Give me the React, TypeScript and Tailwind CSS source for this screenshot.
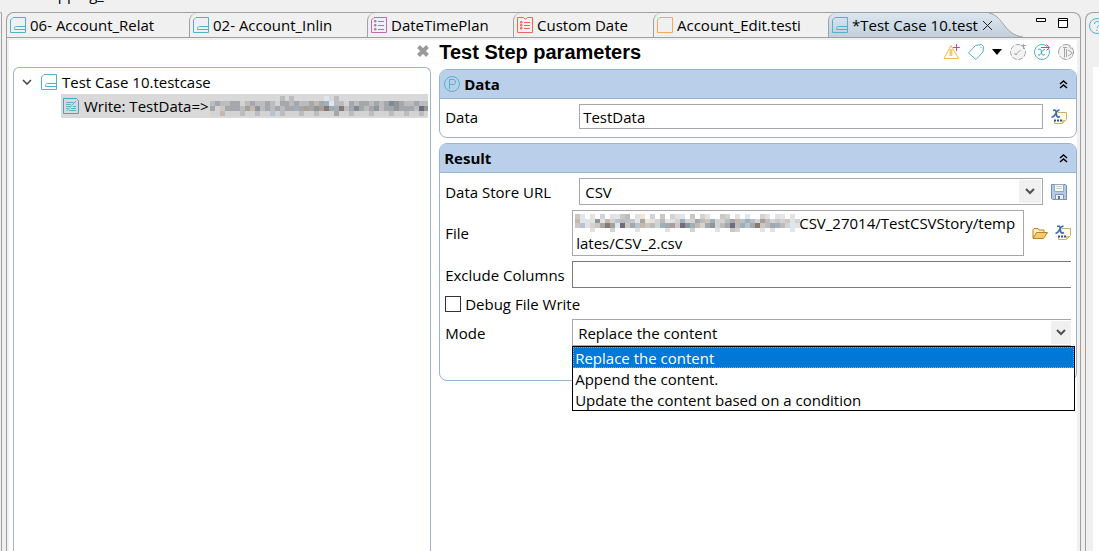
import type { ReactNode } from 'react';

type IconProps = { className?: string };

const CaseIcon = ({ className = 'h-4 w-4' }: IconProps) => (
  <svg viewBox="0 0 16 16" className={`shrink-0 ${className}`} fill="none" stroke="#4fb3c7" aria-hidden="true">
    <path d="M3 .5h12.500v15H.5V3z" />
    <path d="M15.500 9.500h-9c-1.500 0-2 1-2 2v1h11" />
  </svg>
);

const StepIcon = () => (
  <svg viewBox="0 0 16 16" className="h-4 w-4 shrink-0" fill="none" stroke="#3fa9bf" aria-hidden="true">
    <path d="M.5 .5h13l2 2v13H.5z" />
    <path d="M3 4.500h7.500M3 6.500h5M3 8.500h4M3 10.500h2M8 10.500h5M10 8.500h3M6 12.500h7M3.500 13L13 3" strokeWidth=".8" />
  </svg>
);

const ListIcon = ({ color }: { color: string }) => (
  <svg viewBox="0 0 16 16" className="h-4 w-4 shrink-0" fill="none" stroke={color} aria-hidden="true">
    <path d="M3 .5h12.500v15H.5V3z" />
    <path d="M7 4.500h6M7 8.500h6M7 12.500h6" />
    <path d="M3.500 3.500h1.500v1.500H3.500zM3.500 7.500h1.500v1.500H3.500zM3.500 11.500h1.500v1.500H3.500z" />
  </svg>
);

const FolderListIcon = ({ color }: { color: string }) => (
  <svg viewBox="0 0 16 16" className="h-4 w-4 shrink-0" fill="none" stroke={color} aria-hidden="true">
    <path d="M.5 .5h6l1.500 1.500h1L10.500 .5h5v15H.5z" />
    <path d="M7 5.500h6M7 8.500h6M7 11.500h6" />
    <path d="M3.500 4.500h1.500v1.500H3.500zM3.500 7.500h1.500v1.500H3.500zM3.500 10.500h1.500v1.500H3.500z" />
  </svg>
);

const BlankIcon = () => (
  <svg viewBox="0 0 16 16" className="h-4 w-4 shrink-0" fill="none" stroke="#f5a85a" aria-hidden="true">
    <path d="M3 .5h12.500v15H.5V3z" />
  </svg>
);

const ParamIcon = () => (
  <svg viewBox="0 0 16 16" className="h-4 w-4 shrink-0" fill="none" stroke="#4fb3c7" aria-hidden="true">
    <circle cx="8" cy="8" r="7.500" />
    <path d="M5.500 13V3.500H9c3.300 0 3.300 5 0 5H6" />
  </svg>
);

const WarningIcon = () => (
  <svg viewBox="0 0 17 16" className="h-4 w-[17px]" fill="none" aria-hidden="true">
    <path d="M8 1.500L15.500 14.500H1z" stroke="#f9b84d" />
    <path d="M6.500 5h3v7h-3z" fill="#fbc66c" />
    <path d="M13.500 0v7M10 3.500h7" stroke="#e6399b" />
  </svg>
);

const TagIcon = () => (
  <svg viewBox="0 0 16 16" className="h-4 w-4" fill="none" stroke="#4fb3c7" aria-hidden="true">
    <path d="M.5 9L7.500 1.500l6-1 2 2-.5 5.500-7 7.500z" />
    <path d="M13 3v1" />
  </svg>
);

const RunOffIcon = () => (
  <svg viewBox="0 0 16 16" className="h-4 w-4" fill="none" stroke="#a3a3a3" aria-hidden="true">
    <circle cx="8" cy="8" r="7.500" strokeDasharray="5 1.500" fill="#f3f3f3" />
    <path d="M6 10.500L10.500 6M5 9v1.500h2M11 1.500h5M13.500 0v5" />
  </svg>
);

const VariableIcon = () => (
  <svg viewBox="0 0 16 16" className="h-4 w-4" fill="none" stroke="#4fb3c7" aria-hidden="true">
    <circle cx="8" cy="8" r="7.500" />
    <path d="M4 5.500c3-1 3 0 3.500 2.500s1 4 3.500 2.500M11 5.500c-2 0-2.500 1.500-3.500 3s-1.500 3-3.500 2.500" stroke="#2f9db5" />
    <path d="M7 3.500h8M12.500 .5l3 3-3 3" stroke="#e6399b" />
  </svg>
);

const ForkOffIcon = () => (
  <svg viewBox="0 0 16 16" className="h-4 w-4" fill="none" stroke="#a3a3a3" aria-hidden="true">
    <circle cx="8" cy="8" r="7.500" strokeDasharray="9 1.500" fill="#f3f3f3" />
    <path d="M5 3.500h4M6.500 13.500V3.500M8.500 5v8M10 6l4.500 3L10 12M11 2.500l3 3" />
  </svg>
);

const ExpressionIcon = () => (
  <svg viewBox="0 0 16 16" className="h-4 w-4" fill="none" aria-hidden="true">
    <path d="M7 3.500h8.500v7l-4 4H3.500V11" fill="#fffbe9" stroke="#c8b26a" />
    <path d="M15 11h-4v4z" fill="#e2c56f" />
    <path d="M2 1.500c3-1 3 0 3.300 3s1 4.500 3.700 3M8.500 1C6 1 5.500 3 4.500 5S3 8.500 .5 8" stroke="#3e6cb0" strokeWidth="1.700" />
    <path d="M3 11.500h2M6 11.500h2M9 11.500h2" stroke="#2f5596" strokeWidth="2" />
  </svg>
);

const SaveIcon = () => (
  <svg viewBox="0 0 16 16" className="h-4 w-4" fill="none" aria-hidden="true">
    <path d="M.5 .5h14l1 1v14H1.500l-1-1z" fill="#b4cae6" stroke="#6f8fb5" />
    <path d="M3.500 .5h9v7h-9z" fill="#f6f8f2" stroke="#8fa8c6" />
    <path d="M5 2.500h6M5 4.500h6" stroke="#c9d4c4" />
    <path d="M4.500 10.500h8v5h-8z" fill="#e8eef2" stroke="#7c95b2" />
    <path d="M7 12h2v3H7z" fill="#5d7893" />
  </svg>
);

const FolderIcon = () => (
  <svg viewBox="0 0 16 16" className="h-4 w-4" fill="none" stroke="#b9812a" strokeLinejoin="round" aria-hidden="true">
    <path d="M1 13V4.500l1-1h4l1 1.500h5V7.500" fill="#fbeebd" />
    <path d="M1 13.500l3.500-6h11l-4 6z" fill="#f6cc6b" />
  </svg>
);

const Chevron = () => (
  <svg viewBox="0 0 10 7" className="h-[7px] w-[10px]" fill="none" stroke="#505050" strokeWidth="2" aria-hidden="true">
    <path d="M1 1l4 4 4-4" />
  </svg>
);

// Redacted path, one letter per 5px cell
const shades: Record<string, string> = {
  a: '#d3d3d3', b: '#bcbcbe', c: '#a5a8aa', d: '#8f9598', e: '#a89f99', f: '#857b74',
  g: '#9fb0bd', h: '#c5b9ae', i: '#b7c4cf', j: '#7d8b96', k: '#cdc6c1', l: '#e4e2e0',
  m: '#efe6d6', n: '#dfe7ee', o: '#6f6c80',
};

const treeCells = [
  '..............b.b......n.b..................',
  'bcbbccabcbbcbaccbcbbchcgnbbacbccbcbcjdcbbcbb',
  'cakcccbehdbcbcbccgcecdefcgfbcjcbcdbccdcccbod',
  'aahaaabaabaaiabaaabaabaaacaabaaabaaabaabaaba',
];

const fileCells = [
  'kn.l.a.lnkb.lm.a.k.aln.k.al..ka.l.n..al.ln.l.',
  'hnlldlhaibikncmlabnlagaacbkgaabchigbaebakakna',
  'kilakcfenokcihkbagcekodghacdabcobgicfkbcgbanl',
  '...l...a....l.....l....a....l..ka....n.l...n.',
];

const Redacted = ({ rows, className }: { rows: string[]; className: string }) => (
  <svg viewBox={`0 0 ${rows[1].length} 4`} preserveAspectRatio="none" shapeRendering="crispEdges" className={className} aria-hidden="true">
    {rows.map((row, y) =>
      row.split('').map((c, x) => (c === '.' ? null : <rect key={`${x}-${y}`} x={x} y={y} width="1" height="1" fill={shades[c]} />)),
    )}
  </svg>
);

const tabs = [
  { label: '06- Account_Relat', icon: <CaseIcon />, width: 'w-[182px]' },
  { label: '02- Account_Inlin', icon: <CaseIcon />, width: 'w-[178px]' },
  { label: 'DateTimePlan', icon: <ListIcon color="#c069b4" />, width: 'w-[146px]' },
  { label: 'Custom Date', icon: <FolderListIcon color="#f0655a" />, width: 'w-[140px]' },
  { label: 'Account_Edit.testi', icon: <BlankIcon />, width: 'w-[175px]' },
];

const TabBar = () => (
  <div role="tablist" className="flex h-[25px] overflow-hidden rounded-t-lg border-b border-[#a0a0a0]">
    {tabs.map((tab, i) => (
      <button
        key={tab.label}
        role="tab"
        aria-selected={false}
        className={`flex shrink items-center gap-1 overflow-hidden rounded-tl-lg pl-[3px] whitespace-nowrap ${tab.width} ${i > 0 ? 'border-l border-[#a0a0a0]' : ''}`}
      >
        {tab.icon}
        {tab.label}
      </button>
    ))}
    <div className="flex shrink-0 rounded-tl-lg border-l border-[#a0a0a0] bg-linear-to-b from-[#dbe6f0] to-[#c2cfdc]">
      <button role="tab" aria-selected className="flex items-center gap-1 pl-[3px] whitespace-nowrap">
        <CaseIcon />
        *Test Case 10.test
      </button>
      <button aria-label="Close tab" className="relative z-10 pl-1">
        <svg viewBox="0 0 11 11" className="h-[11px] w-[11px]" fill="none" stroke="#222" aria-hidden="true">
          <path d="M1 1l9 9M10 1l-9 9" />
        </svg>
      </button>
    </div>
    <svg viewBox="0 0 34 24" className="-ml-1 h-6 w-[34px] shrink-0" aria-hidden="true">
      <defs>
        <linearGradient id="tabFill" x1="0" y1="0" x2="0" y2="1">
          <stop offset="0" stopColor="#dbe6f0" />
          <stop offset="1" stopColor="#c2cfdc" />
        </linearGradient>
      </defs>
      <path d="M0 0c8 2 11 7 15 12s9 11 19 12H0z" fill="url(#tabFill)" />
      <path d="M0 0c8 2 11 7 15 12s9 11 19 12" fill="none" stroke="#a0a0a0" />
    </svg>
    <div className="ml-auto flex items-center gap-3 pr-3 pb-1">
      <button aria-label="Minimize">
        <svg viewBox="0 0 10 10" className="h-[10px] w-[10px]" fill="#fff" stroke="#000" aria-hidden="true">
          <path d="M.5 .5h9v3h-9z" />
        </svg>
      </button>
      <button aria-label="Maximize">
        <svg viewBox="0 0 10 10" className="h-[10px] w-[10px]" fill="#fff" stroke="#000" aria-hidden="true">
          <path d="M.5 .5h9v9h-9zM0 2.500h10" />
        </svg>
      </button>
    </div>
  </div>
);

const TestTree = () => (
  <section className="flex w-2/5 flex-col pr-[5px] pl-1">
    <div className="flex h-[27px] justify-end pt-1 pr-[2px]">
      <button aria-label="Close panel" className="h-[14px]">
        <svg viewBox="0 0 12 12" className="h-3 w-3" stroke="#9a9a9a" strokeWidth="4" aria-hidden="true">
          <path d="M1.500 1.500l9 9M10.500 1.500l-9 9" />
        </svg>
      </button>
    </div>
    <ul role="tree" className="flex-1 overflow-hidden rounded-t-md border border-b-0 border-[#99b4d1] pt-[2px] pr-[2px]">
      <li role="treeitem" aria-expanded>
        <div className="flex h-6 items-center pl-2">
          <svg viewBox="0 0 10 6" className="mr-[9px] h-[6px] w-[10px]" fill="none" stroke="#444" strokeWidth="1.500" aria-hidden="true">
            <path d="M1 1l4 4 4-4" />
          </svg>
          <CaseIcon />
          <span className="pl-[5px]">Test Case 10.testcase</span>
        </div>
        <ul role="group" className="pl-[47px]">
          <li role="treeitem" aria-selected className="flex h-6 items-center gap-[5px] overflow-hidden bg-[#d9d9d9] pl-[2px] whitespace-nowrap">
            <StepIcon />
            <span>Write: TestData=&gt;</span>
            <Redacted rows={treeCells} className="-ml-1 h-5 min-w-0 flex-1" />
          </li>
        </ul>
      </li>
    </ul>
  </section>
);

const Section = ({ title, icon, children }: { title: string; icon?: ReactNode; children: ReactNode }) => (
  <section className="rounded-lg border border-[#99b4d1]">
    <header className="flex h-[29px] items-center gap-1 rounded-t-md border-b border-[#99b4d1] bg-[#bad0ea] pr-2 pl-1">
      {icon}
      <h2 className="font-bold">{title}</h2>
      <button aria-label={`Collapse ${title}`} className="ml-auto">
        <svg viewBox="0 0 9 9" className="h-[9px] w-[9px]" fill="none" stroke="#000" strokeWidth="1.500" aria-hidden="true">
          <path d="M1 4l3.500-3L8 4M1 8l3.500-3L8 8" />
        </svg>
      </button>
    </header>
    {children}
  </section>
);

const modes = ['Replace the content', 'Append the content.', 'Update the content based on a condition'];

const Parameters = () => (
  <main className="min-w-0 flex-1 pl-[3px]">
    <div className="flex h-[29px] items-center pr-[3px] pb-[6px]">
      <h1 className="font-['Liberation_Sans',Arial,sans-serif] text-xl font-bold">Test Step parameters</h1>
      <div className="ml-auto flex items-center gap-2">
        <button aria-label="Add warning"><WarningIcon /></button>
        <button aria-label="Tags"><TagIcon /></button>
        <button aria-label="More tags">
          <svg viewBox="0 0 10 6" className="h-[6px] w-[10px]" aria-hidden="true">
            <path d="M0 0h10L5 6z" />
          </svg>
        </button>
        <button aria-label="Run step"><RunOffIcon /></button>
        <button aria-label="Variables"><VariableIcon /></button>
        <button aria-label="Branch"><ForkOffIcon /></button>
      </div>
    </div>

    <div className="flex flex-col gap-[5px]">
      <Section title="Data" icon={<ParamIcon />}>
        <div className="flex items-center px-[5px] pt-[5px] pb-2">
          <label htmlFor="data" className="w-[134px] shrink-0">Data</label>
          <input id="data" defaultValue="TestData" className="h-[25px] min-w-0 flex-1 border border-[#a7a7ad] px-[3px]" />
          <button aria-label="Edit data expression" className="ml-2 w-5"><ExpressionIcon /></button>
        </div>
      </Section>

      <Section title="Result">
        <div className="flex flex-col gap-[5px] px-[5px] pt-[5px] pb-[34px]">
          <div className="flex items-center">
            <label htmlFor="store" className="w-[134px] shrink-0">Data Store URL</label>
            <div className="relative min-w-0 flex-1">
              <select id="store" className="block h-[27px] w-full appearance-none border border-[#a7a7ad] px-[5px]">
                <option>CSV</option>
              </select>
              <span className="pointer-events-none absolute inset-y-[2px] right-[2px] flex w-[22px] items-center justify-center bg-[#f0f0f0]">
                <Chevron />
              </span>
            </div>
            <button aria-label="Save store" className="ml-2 w-5"><SaveIcon /></button>
          </div>

          <div className="flex items-center">
            <label htmlFor="file" className="w-[127px] shrink-0">File</label>
            <div className="relative min-w-0 flex-1">
              <textarea
                id="file"
                rows={2}
                defaultValue="CSV_27014/TestCSVStory/templates/CSV_2.csv"
                className="block h-[46px] w-full resize-none overflow-hidden border border-[#a7a7ad] py-[2px] pr-[6px] pl-[3px] indent-[223px] leading-5 break-all"
              />
              <Redacted rows={fileCells} className="absolute top-1 left-[3px] h-[18px] w-[225px]" />
            </div>
            <button aria-label="Browse" className="ml-2 w-4"><FolderIcon /></button>
            <button aria-label="Edit file expression" className="ml-[7px] w-4"><ExpressionIcon /></button>
          </div>

          <div className="flex items-center">
            <label htmlFor="exclude" className="w-[127px] shrink-0">Exclude Columns</label>
            <input id="exclude" className="h-[27px] min-w-0 flex-1 border border-r-0 border-[#7a7a7a] px-1" />
          </div>

          <label className="flex h-[21px] items-center gap-1">
            <input type="checkbox" className="h-4 w-4 appearance-none border border-[#333] bg-white" />
            Debug File Write
          </label>

          <div className="flex items-center">
            <label htmlFor="mode" className="w-[127px] shrink-0">Mode</label>
            <div className="relative min-w-0 flex-1">
              <select id="mode" className="block h-[27px] w-full appearance-none border border-r-0 border-[#a7a7ad] px-[5px]">
                {modes.map((mode) => (
                  <option key={mode}>{mode}</option>
                ))}
              </select>
              <span className="pointer-events-none absolute inset-y-[2px] right-0 flex w-5 items-center justify-center bg-[#f0f0f0]">
                <Chevron />
              </span>
              <ul role="listbox" aria-label="Mode" className="absolute top-full -right-1 left-0 z-10 border border-black bg-white">
                {modes.map((mode, i) => (
                  <li
                    key={mode}
                    role="option"
                    aria-selected={i === 0}
                    className={`h-[21px] px-[2px] leading-[22px] ${i === 0 ? 'bg-[#0078d7] text-white outline-1 -outline-offset-1 outline-[#ff8728] outline-dotted' : ''}`}
                  >
                    {mode}
                  </li>
                ))}
              </ul>
            </div>
          </div>
        </div>
      </Section>
    </div>
  </main>
);

const App = () => {
  return (
    <div className="flex min-h-screen flex-col overflow-hidden bg-[#f0f0f0] font-['Open_Sans',sans-serif] text-[15px] leading-5 text-black">
      <div className="flex h-3 items-end overflow-hidden pl-9">
        <span className="mb-2 leading-5">Mapping_</span>
      </div>
      <div className="flex flex-1">
        <div className="w-[2px] rounded-tr-sm border-t border-r border-[#a0a0a0]" />
        <div className="ml-1 flex min-w-0 flex-1 flex-col rounded-t-lg border border-b-0 border-[#a0a0a0]">
          <TabBar />
          <div className="mt-[2px] mr-[3px] ml-[2px] flex flex-1 bg-white">
            <TestTree />
            <Parameters />
          </div>
        </div>
        <div className="ml-1 flex w-[14px] flex-col overflow-hidden rounded-tl-lg border-t border-l border-[#a0a0a0] pl-[3px]">
          <button aria-label="Help" className="mt-[5px] flex h-[49px] items-start">
            <svg viewBox="0 0 16 16" className="h-4 w-4 shrink-0" fill="none" stroke="#4fb3c7" aria-hidden="true">
              <circle cx="8" cy="8" r="7.500" />
              <path d="M5.500 6c0-3.500 5-3.500 5 0 0 2-2.500 2-2.500 4M8 11.500v1.500" />
            </svg>
          </button>
          <div className="ml-1 flex-1 bg-white" />
        </div>
      </div>
    </div>
  );
};

export default App;
